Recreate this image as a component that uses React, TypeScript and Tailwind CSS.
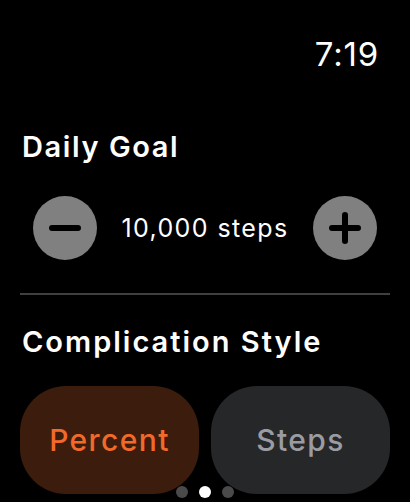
import React from 'react';

const font = { fontFamily: 'Inter, "Noto Sans", sans-serif' };

const PageDots = ({ active }: { active: number }) => (
    <div className="absolute left-1/2 top-[486px] -translate-x-1/2 flex items-center gap-[11px]">
        {[0, 1, 2].map(i => (
            <span
                key={i}
                className={i === active ? 'w-[12px] h-[12px] rounded-full bg-white' : 'w-[12px] h-[12px] rounded-full bg-[#4a4a4a]'}
            />
        ))}
    </div>
);

const StepButton = ({ kind }: { kind: 'minus' | 'plus' }) => (
    <button className="w-[64px] h-[64px] rounded-full bg-[#808080] flex items-center justify-center shrink-0">
        <svg width="32" height="32" viewBox="0 0 32 32">
            <line x1="3" y1="16" x2="29" y2="16" stroke="#000" strokeWidth="6" strokeLinecap="round" />
            {kind === 'plus' && <line x1="16" y1="3" x2="16" y2="29" stroke="#000" strokeWidth="6" strokeLinecap="round" />}
        </svg>
    </button>
);

export default function App() {
    const [goal, setGoal] = React.useState(10000);
    const [style, setStyle] = React.useState<'percent' | 'steps'>('percent');

    const pill = (on: boolean) => on
        ? 'h-[108px] rounded-[46px] bg-[#3c1d0d] text-[#f26a2a] text-[30px] font-medium tracking-[1.4px]'
        : 'h-[108px] rounded-[46px] bg-[#262729] text-[#9b9ca2] text-[30px] font-medium tracking-[1.4px]';

    return (
        <div className="relative w-[410px] h-[502px] bg-black text-white overflow-hidden" style={font}>
            {/* Status bar */}
            <div className="flex justify-end pr-[31px] pt-[38px]">
                <span className="text-[33px] leading-[33px] font-normal tracking-[0.8px]">7:19</span>
            </div>

            {/* Daily goal */}
            <h2 className="mt-[61px] px-[22px] text-[29px] leading-[29px] font-semibold tracking-[1.6px]">Daily Goal</h2>

            <div className="mt-[35px] px-[33px] flex items-center justify-between">
                <div onClick={() => setGoal(g => Math.max(1000, g - 500))}>
                    <StepButton kind="minus" />
                </div>
                <span className="text-[25px] leading-[25px] tracking-[1.4px]">{goal.toLocaleString('en-US')} steps</span>
                <div onClick={() => setGoal(g => g + 500)}>
                    <StepButton kind="plus" />
                </div>
            </div>

            <div className="mt-[33px] mx-[20px] h-[2px] bg-[#404040]" />

            {/* Complication style */}
            <h2 className="mt-[32px] px-[22px] text-[29px] leading-[29px] font-semibold tracking-[2px]">Complication Style</h2>

            <div className="mt-[30px] px-[20px] grid grid-cols-2 gap-[12px]">
                <button onClick={() => setStyle('percent')} className={pill(style === 'percent')}>
                    Percent
                </button>
                <button onClick={() => setStyle('steps')} className={pill(style === 'steps')}>
                    Steps
                </button>
            </div>

            <PageDots active={1} />
        </div>
    );
}
